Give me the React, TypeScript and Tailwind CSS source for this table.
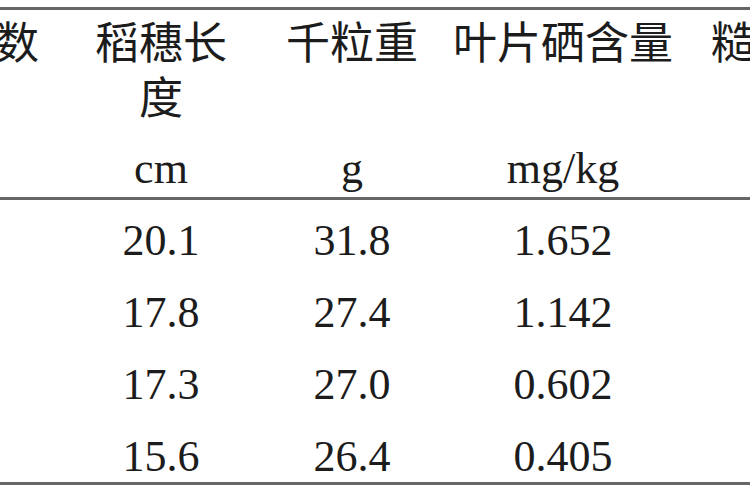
const cols = "grid grid-cols-[230px_190px_192px_230px_286px] text-center";

const serif = "font-['Liberation_Serif','Noto_Sans_CJK_SC',serif]";
const cjk = "font-['Noto_Sans_CJK_SC',sans-serif]";

const headers = [
  <>每穗粒数</>,
  <>
    稻穗长
    <br />度
  </>,
  <>千粒重</>,
  <>叶片硒含量</>,
  <>糙米硒含量</>,
];

const units = ["", "cm", "g", "mg/kg", ""];

const rows = [
  ["", "20.1", "31.8", "1.652", ""],
  ["", "17.8", "27.4", "1.142", ""],
  ["", "17.3", "27.0", "0.602", ""],
  ["", "15.6", "26.4", "0.405", ""],
];

const App = (): JSX.Element => {
  return (
    <div className="w-[750px] h-[500px] bg-white overflow-hidden text-[#1c1c1c] text-[44px]">
      <div className="mt-[7px] border-t-[3px] border-b-[3px] border-[#666]">
        <div className="-ml-[164px] w-max">
          <div className={`${cols} ${cjk} h-[136px] pt-[3px] leading-[55px] items-start`}>
            {headers.map((h, i) => (
              <div key={i}>{h}</div>
            ))}
          </div>
          <div className={`${cols} ${serif} h-[51px] leading-[46px]`}>
            {units.map((u, i) => (
              <div key={i}>{u}</div>
            ))}
          </div>
        </div>
        <div className="border-t-[3px] border-[#666]">
          <div className="-ml-[164px] w-max">
            {rows.map((r, ri) => (
              <div
                key={ri}
                className={`${cols} ${serif} leading-[46px] pt-[18px] ${
                  ri === rows.length - 1 ? "pb-[2px]" : "pb-[8px]"
                }`}
              >
                {r.map((v, i) => (
                  <div key={i}>{v}</div>
                ))}
              </div>
            ))}
          </div>
        </div>
      </div>
    </div>
  );
};

export default App;
